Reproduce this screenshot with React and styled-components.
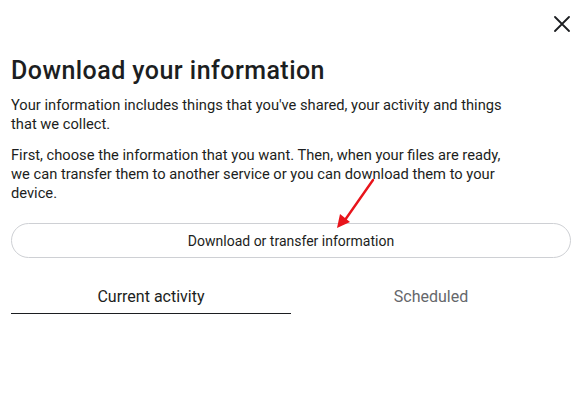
import React from 'react';
import styled, { createGlobalStyle } from 'styled-components';

const Global = createGlobalStyle`
  body {
    margin: 0;
    background: #ffffff;
    font-family: Roboto, "Noto Sans", sans-serif;
    color: #1c1e21;
  }
`;

export default function App() {
    return (
        <Dialog>
            <Global />
            <TopBar>
                <CloseButton aria-label="Close">
                    <svg width="16" height="16" viewBox="0 0 16 16">
                        <path d="M1 1 L15 15 M15 1 L1 15" stroke="#1c1e21" strokeWidth="1.8" strokeLinecap="round" />
                    </svg>
                </CloseButton>
            </TopBar>
            <Title>Download your information</Title>
            <Text>Your information includes things that you've shared, your activity and things that we collect.</Text>
            <Text>First, choose the information that you want. Then, when your files are ready, we can transfer them to another service or you can download them to your device.</Text>
            <PillButton>Download or transfer information</PillButton>
            <Tabs>
                <Tab active>Current activity</Tab>
                <Tab>Scheduled</Tab>
            </Tabs>
            <Arrow width="50" height="60" viewBox="0 0 50 60">
                <path d="M42 2 L14 42" stroke="#e8141b" strokeWidth="2.4" strokeLinecap="round" />
                <path d="M6 50 L9 36 L19 44 Z" fill="#e8141b" />
            </Arrow>
        </Dialog>
    );
}

const Dialog = styled.div`
    position: relative;
    width: 582px;
    height: 401px;
    padding: 0 11px;
    box-sizing: border-box;
`;

const TopBar = styled.div`
    display: flex;
    justify-content: flex-end;
    height: 56px;
    padding-top: 15px;
    box-sizing: border-box;
`;

const CloseButton = styled.button`
    border: none;
    background: none;
    padding: 0;
    width: 18px;
    height: 18px;
    display: flex;
    align-items: center;
    justify-content: center;
    cursor: pointer;
`;

const Title = styled.h1`
    margin: 0 0 10px;
    font-size: 25px;
    line-height: 30px;
    font-weight: 500;
    letter-spacing: 0.45px;
    color: #1c1e21;
`;

const Text = styled.p`
    max-width: 496px;
    margin: 0 0 12px;
    font-size: 14.7px;
    line-height: 19px;
    color: #1c1e21;
`;

const PillButton = styled.button`
    display: block;
    width: 100%;
    height: 35px;
    margin-top: 20px;
    border: 1px solid #ced0d4;
    border-radius: 18px;
    background: #ffffff;
    font-family: inherit;
    font-size: 14px;
    color: #1c1e21;
    cursor: pointer;
`;

const Tabs = styled.div`
    display: grid;
    grid-template-columns: 1fr 1fr;
    margin-top: 29px;
`;

const Tab = styled.div`
    text-align: center;
    font-size: 16px;
    line-height: 20px;
    padding-bottom: 6px;
    color: ${p => (p.active ? '#1c1e21' : '#65676b')};
    border-bottom: 1px solid ${p => (p.active ? '#1c1e21' : 'transparent')};
`;

const Arrow = styled.svg`
    position: absolute;
    left: 331px;
    top: 178px;
`;
